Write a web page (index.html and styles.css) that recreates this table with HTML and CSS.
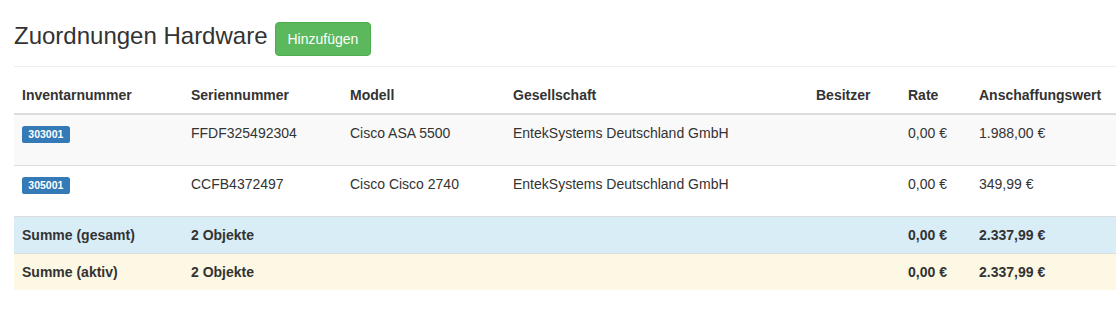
FILE: index.html
```html
<!DOCTYPE html>
<html lang="de">
<head>
<meta charset="utf-8">
<title>Zuordnungen Hardware</title>
<link rel="stylesheet" href="styles.css">
</head>
<body>
<div class="page">
  <div class="title-bar">
    <h3 class="title">Zuordnungen Hardware</h3>
    <button class="btn btn-success" type="button">Hinzufügen</button>
  </div>
  <hr class="divider">
  <table class="table">
    <colgroup>
      <col class="c-inv"><col class="c-ser"><col class="c-mod"><col class="c-ges"><col class="c-bes"><col class="c-rate"><col class="c-wert">
    </colgroup>
    <thead>
      <tr>
        <th>Inventarnummer</th>
        <th>Seriennummer</th>
        <th>Modell</th>
        <th>Gesellschaft</th>
        <th>Besitzer</th>
        <th>Rate</th>
        <th>Anschaffungswert</th>
      </tr>
    </thead>
    <tbody>
      <tr class="item striped">
        <td><span class="label">303001</span></td>
        <td>FFDF325492304</td>
        <td>Cisco ASA 5500</td>
        <td>EntekSystems Deutschland GmbH</td>
        <td></td>
        <td>0,00 €</td>
        <td>1.988,00 €</td>
      </tr>
      <tr class="item">
        <td><span class="label">305001</span></td>
        <td>CCFB4372497</td>
        <td>Cisco Cisco 2740</td>
        <td>EntekSystems Deutschland GmbH</td>
        <td></td>
        <td>0,00 €</td>
        <td>349,99 €</td>
      </tr>
      <tr class="sum info">
        <td>Summe (gesamt)</td>
        <td>2 Objekte</td>
        <td></td>
        <td></td>
        <td></td>
        <td>0,00 €</td>
        <td>2.337,99 €</td>
      </tr>
      <tr class="sum warning">
        <td>Summe (aktiv)</td>
        <td>2 Objekte</td>
        <td></td>
        <td></td>
        <td></td>
        <td>0,00 €</td>
        <td>2.337,99 €</td>
      </tr>
    </tbody>
  </table>
</div>
</body>
</html>
```
FILE: styles.css
```css
html, body {
  margin: 0;
  padding: 0;
  background: #fff;
}
body {
  font-family: "Liberation Sans", Arial, sans-serif;
  font-size: 14px;
  line-height: 20px;
  color: #333;
  overflow: hidden;
}
.page {
  padding: 22px 0 0 14px;
}
.title-bar {
  display: flex;
  align-items: baseline;
  gap: 7px;
}
.title {
  margin: 0;
  font-size: 24px;
  font-weight: 500;
  line-height: 26.4px;
  color: #333;
}
.btn {
  font-family: inherit;
  font-size: 14px;
  line-height: 20px;
  padding: 6px 12px;
  border: 1px solid transparent;
  border-radius: 4px;
  cursor: pointer;
}
.btn-success {
  color: #fff;
  background: #5cb85c;
  border-color: #4cae4c;
}
.divider {
  margin: 10px 0;
  border: 0;
  border-top: 1px solid #eee;
  height: 0;
}
.table {
  width: 1102px;
  border-collapse: collapse;
  border-spacing: 0;
  table-layout: fixed;
}
.c-inv { width: 169px; }
.c-ser { width: 159px; }
.c-mod { width: 163px; }
.c-ges { width: 303px; }
.c-bes { width: 92px; }
.c-rate { width: 71px; }
.c-wert { width: 145px; }
.table th,
.table td {
  padding: 8px;
  text-align: left;
  vertical-align: top;
  line-height: 20px;
  white-space: nowrap;
}
.table th {
  font-weight: bold;
  vertical-align: bottom;
  border-bottom: 2px solid #ddd;
}
.table td {
  border-top: 1px solid #ddd;
}
.item td {
  height: 34px;
}
.striped td {
  background: #f9f9f9;
}
.sum td {
  font-weight: bold;
}
.info td {
  background: #d9edf7;
}
.warning td {
  background: #fcf8e3;
}
.label {
  display: inline;
  padding: .2em .6em .3em;
  font-size: 75%;
  font-weight: bold;
  line-height: 1;
  color: #fff;
  background: #337ab7;
  border-radius: .25em;
  white-space: nowrap;
  vertical-align: baseline;
}
```
